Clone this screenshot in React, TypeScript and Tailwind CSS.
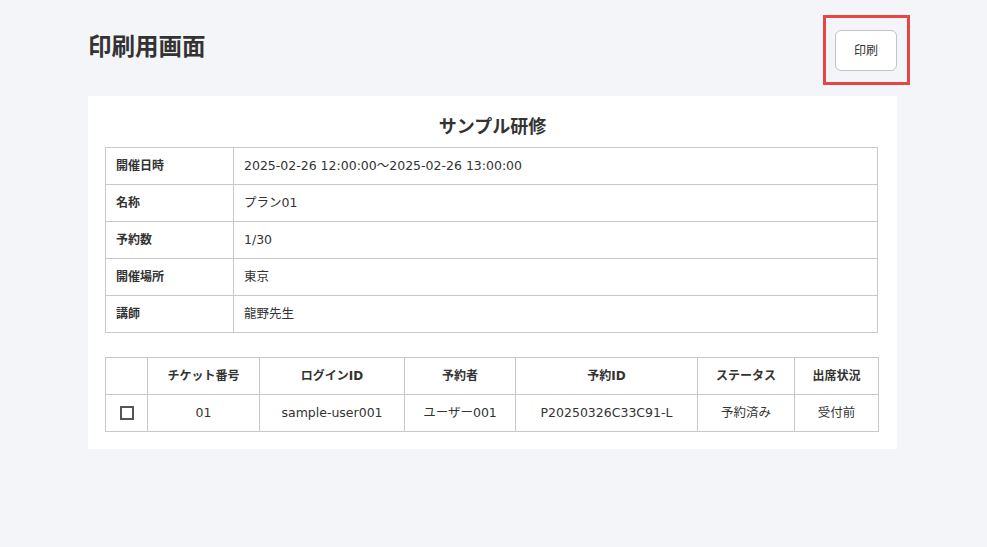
import React from "react";

const font = { fontFamily: '"DejaVu Sans", "Noto Sans CJK JP", sans-serif' };

const infoRows: [string, string][] = [
  ["開催日時", "2025-02-26 12:00:00～2025-02-26 13:00:00"],
  ["名称", "プラン01"],
  ["予約数", "1/30"],
  ["開催場所", "東京"],
  ["講師", "龍野先生"],
];

const headers = ["", "チケット番号", "ログインID", "予約者", "予約ID", "ステータス", "出席状況"];
const widths = ["w-[42px]", "w-[112px]", "w-[145px]", "w-[111px]", "w-[182px]", "w-[97px]", "w-[84px]"];
const row = ["01", "sample-user001", "ユーザー001", "P20250326C33C91-L", "予約済み", "受付前"];

export default function App() {
  return (
    <div className="min-h-[547px] w-full bg-[#f4f5f9] text-[#333]" style={font}>
      <div className="ml-[88px] w-[809px]">
        <div className="flex h-[96px] items-start justify-between">
          <h1 className="mt-[32px] text-[23.5px] font-bold leading-[30px] text-[#333]">印刷用画面</h1>
          <div className="relative mt-[30px]">
            <button className="h-[41px] w-[62px] rounded-[6px] border border-[#c4c4c4] bg-white text-[12px] text-[#333]">
              印刷
            </button>
            <div className="pointer-events-none absolute -left-[12px] -right-[13px] -top-[15px] -bottom-[14px] border-[3px] border-[#e84545]" />
          </div>
        </div>
        <div className="bg-white px-[17px] pb-[17px] pt-[16px]">
          <div className="mb-[5px] h-[30px] text-center text-[18px] font-bold leading-[30px] text-[#333]">サンプル研修</div>
          <table className="w-[773px] border-collapse text-[12.5px]">
            <tbody>
              {infoRows.map(([k, v]) => (
                <tr key={k} className="h-[37px]">
                  <th className="w-[128px] border border-[#c8c8c8] px-[10px] text-left text-[12px] font-bold">{k}</th>
                  <td className="border border-[#c8c8c8] px-[10px]">{v}</td>
                </tr>
              ))}
            </tbody>
          </table>
          <table className="mt-[24px] w-[773px] table-fixed border-collapse text-[12.5px]">
            <thead>
              <tr className="h-[37px]">
                {headers.map((h, i) => (
                  <th key={i} className={`${widths[i]} border border-[#c8c8c8] text-center text-[12px] font-bold`}>
                    {h}
                  </th>
                ))}
              </tr>
            </thead>
            <tbody>
              <tr className="h-[37px]">
                <td className="border border-[#c8c8c8] text-center">
                  <span className="inline-block h-[14px] w-[14px] border-[2px] border-[#555] align-middle" />
                </td>
                {row.map((c, i) => (
                  <td key={i} className="border border-[#c8c8c8] text-center">
                    {c}
                  </td>
                ))}
              </tr>
            </tbody>
          </table>
        </div>
      </div>
    </div>
  );
}
